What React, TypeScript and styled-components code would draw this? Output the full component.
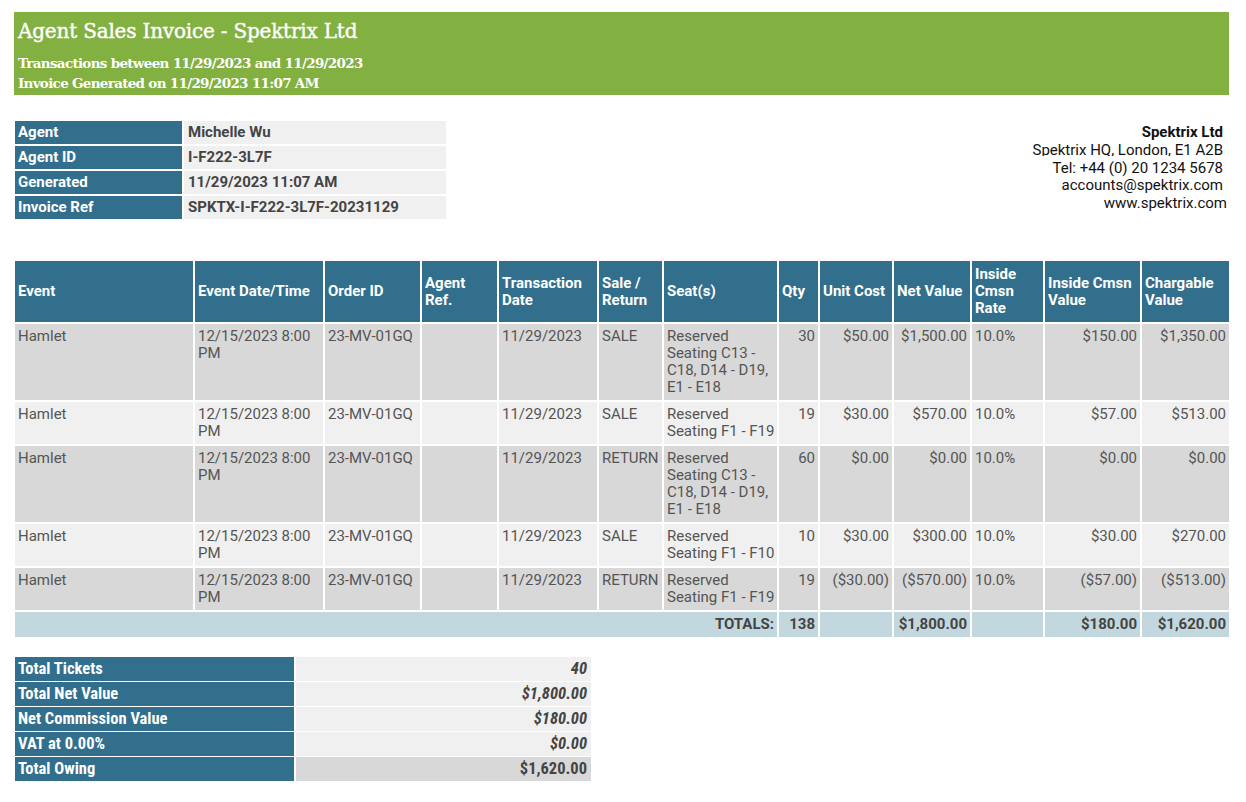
import React from 'react';
import styled, { createGlobalStyle } from 'styled-components';

const GlobalStyle = createGlobalStyle`
  body {
    margin: 0;
    background: #ffffff;
    font-family: Roboto, "Liberation Sans", sans-serif;
    color: #555555;
  }
`;

const Page = styled.div`
  padding: 12px 0 20px 13px;
  width: 1218px;
`;

const Banner = styled.header`
  margin-left: 1px;
  width: 1215px;
  height: 83px;
  box-sizing: border-box;
  background: #82b041;
  color: #ffffff;
  padding: 4px 4px 0;
  font-family: "DejaVu Serif", "Liberation Serif", serif;
`;

const BannerTitle = styled.h1`
  margin: 0 0 8px;
  font-size: 20px;
  font-weight: normal;
  line-height: 30px;
  letter-spacing: -0.2px;
  -webkit-text-stroke: 0.4px #ffffff;
`;

const BannerLine = styled.div`
  font-size: 13.5px;
  font-weight: bold;
  line-height: 19.5px;
  letter-spacing: -0.7px;
`;

const InfoRow = styled.section`
  display: flex;
  justify-content: space-between;
  align-items: flex-start;
  margin-top: 24px;
`;

const InfoTable = styled.table`
  border-collapse: separate;
  border-spacing: 2px;
  width: 435px;
  table-layout: fixed;
  font-size: 15px;
  font-weight: bold;
  line-height: 17px;
`;

const InfoLabel = styled.th`
  width: 161px;
  background: #316f8d;
  color: #ffffff;
  text-align: left;
  padding: 3px 3px;
`;

const InfoValue = styled.td`
  background: #f0f0f0;
  color: #444444;
  padding: 3px 4px;
`;

const Address = styled.address`
  font-style: normal;
  text-align: right;
  color: #111111;
  font-size: 15px;
  line-height: 17.8px;
  margin: 5px 8px 0 0;
`;

const AddressName = styled.div`
  font-weight: bold;
`;

const ClippedLine = styled.div`
  height: 14px;
  overflow: hidden;
  margin-bottom: 3.8px;
`;

const WebLine = styled.div`
  margin-right: -4px;
`;

const SalesTable = styled.table`
  margin-top: 38px;
  border-collapse: separate;
  border-spacing: 2px;
  width: 1218px;
  table-layout: fixed;
  font-size: 15px;
  line-height: 17px;
`;

const HeadCell = styled.th`
  background: #316f8d;
  color: #ffffff;
  font-weight: bold;
  text-align: left;
  vertical-align: middle;
  padding: 3px 3px;
  height: 55px;
`;

const Row = styled.tr<{ $shade: boolean }>`
  background: ${(p) => (p.$shade ? '#d8d8d8' : '#f0f0f0')};
`;

const Cell = styled.td<{ $num?: boolean }>`
  vertical-align: top;
  padding: ${(p) => (p.$num ? '4px 3px' : '4px 0 4px 3px')};
  text-align: ${(p) => (p.$num ? 'right' : 'left')};
  color: #555555;
`;

const TotalsRow = styled.tr`
  background: #c3d7de;
`;

const TotalCell = styled.td`
  padding: 4px 3px;
  text-align: right;
  font-weight: bold;
  color: #444444;
`;

const SummaryTable = styled.table`
  margin-top: 17px;
  border-collapse: separate;
  border-spacing: 2px 1.5px;
  width: 580px;
  table-layout: fixed;
  font-size: 16.5px;
  line-height: 18px;
  font-weight: bold;
  font-family: "Roboto Condensed", "Liberation Sans Narrow", Roboto, sans-serif;
  font-stretch: condensed;
`;

const SummaryLabel = styled.th`
  width: 273px;
  background: #316f8d;
  color: #ffffff;
  text-align: left;
  padding: 3px 3px;
`;

const SummaryValue = styled.td<{ $final?: boolean }>`
  background: ${(p) => (p.$final ? '#d8d8d8' : '#f0f0f0')};
  font-style: ${(p) => (p.$final ? 'normal' : 'italic')};
  color: #444444;
  text-align: right;
  padding: 3px 4px;
`;

const columns = [
  { title: 'Event', width: 178 },
  { title: 'Event Date/Time', width: 128 },
  { title: 'Order ID', width: 95 },
  { title: 'Agent Ref.', width: 75 },
  { title: 'Transaction Date', width: 98 },
  { title: 'Sale / Return', width: 63 },
  { title: 'Seat(s)', width: 113 },
  { title: 'Qty', width: 39 },
  { title: 'Unit Cost', width: 72 },
  { title: 'Net Value', width: 76 },
  { title: 'Inside Cmsn Rate', width: 71 },
  { title: 'Inside Cmsn Value', width: 95 },
  { title: 'Chargable Value', width: 87 },
];

const rows = [
  { type: 'SALE', seats: 'Reserved Seating C13 - C18, D14 - D19, E1 - E18', qty: 30, unit: '$50.00', net: '$1,500.00', cmsn: '$150.00', charge: '$1,350.00' },
  { type: 'SALE', seats: 'Reserved Seating F1 - F19', qty: 19, unit: '$30.00', net: '$570.00', cmsn: '$57.00', charge: '$513.00' },
  { type: 'RETURN', seats: 'Reserved Seating C13 - C18, D14 - D19, E1 - E18', qty: 60, unit: '$0.00', net: '$0.00', cmsn: '$0.00', charge: '$0.00' },
  { type: 'SALE', seats: 'Reserved Seating F1 - F10', qty: 10, unit: '$30.00', net: '$300.00', cmsn: '$30.00', charge: '$270.00' },
  { type: 'RETURN', seats: 'Reserved Seating F1 - F19', qty: 19, unit: '($30.00)', net: '($570.00)', cmsn: '($57.00)', charge: '($513.00)' },
];

const agentInfo = [
  ['Agent', 'Michelle Wu'],
  ['Agent ID', 'I-F222-3L7F'],
  ['Generated', '11/29/2023 11:07 AM'],
  ['Invoice Ref', 'SPKTX-I-F222-3L7F-20231129'],
];

const summary = [
  ['Total Tickets', '40'],
  ['Total Net Value', '$1,800.00'],
  ['Net Commission Value', '$180.00'],
  ['VAT at 0.00%', '$0.00'],
];

const App: React.FC = () => {
  return (
    <Page>
      <GlobalStyle />
      <Banner>
        <BannerTitle>Agent Sales Invoice - Spektrix Ltd</BannerTitle>
        <BannerLine>Transactions between 11/29/2023 and 11/29/2023</BannerLine>
        <BannerLine>Invoice Generated on 11/29/2023 11:07 AM</BannerLine>
      </Banner>

      <InfoRow>
        <InfoTable>
          <tbody>
            {agentInfo.map(([label, value]) => (
              <tr key={label}>
                <InfoLabel>{label}</InfoLabel>
                <InfoValue>{value}</InfoValue>
              </tr>
            ))}
          </tbody>
        </InfoTable>
        <Address>
          <AddressName>Spektrix Ltd</AddressName>
          <ClippedLine>Spektrix HQ, London, E1 A2B</ClippedLine>
          <div>Tel: +44 (0) 20 1234 5678</div>
          <div>accounts@spektrix.com</div>
          <WebLine>www.spektrix.com</WebLine>
        </Address>
      </InfoRow>

      <SalesTable>
        <colgroup>
          {columns.map((c) => (
            <col key={c.title} style={{ width: c.width }} />
          ))}
        </colgroup>
        <thead>
          <tr>
            {columns.map((c) => (
              <HeadCell key={c.title}>{c.title}</HeadCell>
            ))}
          </tr>
        </thead>
        <tbody>
          {rows.map((r, i) => (
            <Row key={i} $shade={i % 2 === 0}>
              <Cell>Hamlet</Cell>
              <Cell>12/15/2023 8:00 PM</Cell>
              <Cell>23-MV-01GQ</Cell>
              <Cell />
              <Cell>11/29/2023</Cell>
              <Cell>{r.type}</Cell>
              <Cell>{r.seats}</Cell>
              <Cell $num>{r.qty}</Cell>
              <Cell $num>{r.unit}</Cell>
              <Cell $num>{r.net}</Cell>
              <Cell>10.0%</Cell>
              <Cell $num>{r.cmsn}</Cell>
              <Cell $num>{r.charge}</Cell>
            </Row>
          ))}
          <TotalsRow>
            <TotalCell colSpan={7}>TOTALS:</TotalCell>
            <TotalCell>138</TotalCell>
            <TotalCell />
            <TotalCell>$1,800.00</TotalCell>
            <TotalCell />
            <TotalCell>$180.00</TotalCell>
            <TotalCell>$1,620.00</TotalCell>
          </TotalsRow>
        </tbody>
      </SalesTable>

      <SummaryTable>
        <tbody>
          {summary.map(([label, value]) => (
            <tr key={label}>
              <SummaryLabel>{label}</SummaryLabel>
              <SummaryValue>{value}</SummaryValue>
            </tr>
          ))}
          <tr>
            <SummaryLabel>Total Owing</SummaryLabel>
            <SummaryValue $final>$1,620.00</SummaryValue>
          </tr>
        </tbody>
      </SummaryTable>
    </Page>
  );
};

export default App;
